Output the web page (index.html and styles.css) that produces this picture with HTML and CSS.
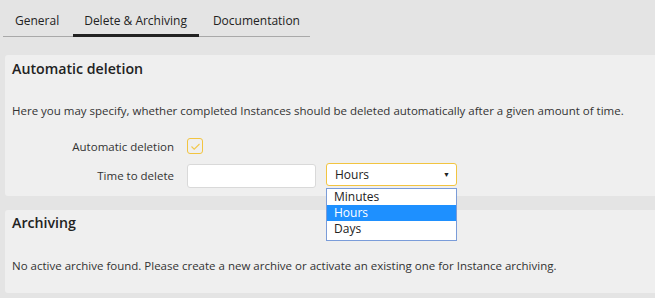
FILE: index.html
```html
<!DOCTYPE html>
<html>
<head>
<meta charset="utf-8">
<link rel="stylesheet" href="styles.css">
</head>
<body>
<div class="tabs">
  <div class="tab">General</div>
  <div class="tab active">Delete &amp; Archiving</div>
  <div class="tab">Documentation</div>
</div>

<section class="panel panel-delete">
  <h2 class="panel-title">Automatic deletion</h2>
  <p class="panel-text">Here you may specify, whether completed Instances should be deleted automatically after a given amount of time.</p>
  <div class="form">
    <div class="form-label">Automatic deletion</div>
    <div class="form-field">
      <span class="checkbox">
        <svg width="11" height="9" viewBox="0 0 11 9"><path d="M1.5 4.5 L4.2 7.2 L9.5 2" fill="none" stroke="#f2c84b" stroke-width="1.1"/></svg>
      </span>
    </div>
    <div class="form-label">Time to delete</div>
    <div class="form-field field-row">
      <span class="text-input"></span>
      <div class="select-wrap">
        <div class="select">
          <span>Hours</span>
          <span class="arrow">&#9660;</span>
        </div>
        <ul class="dropdown">
          <li>Minutes</li>
          <li class="selected">Hours</li>
          <li>Days</li>
        </ul>
      </div>
    </div>
  </div>
</section>

<section class="panel panel-archive">
  <h2 class="panel-title">Archiving</h2>
  <p class="panel-text">No active archive found. Please create a new archive or activate an existing one for Instance archiving.</p>
</section>
</body>
</html>
```

FILE: styles.css
```css
html, body {
  margin: 0;
  padding: 0;
}
body {
  background: #e4e4e4;
  font-family: "Open Sans", "Noto Sans", sans-serif;
  font-size: 11.5px;
  color: #333;
  width: 655px;
  height: 298px;
  overflow: hidden;
}
.tabs {
  display: flex;
  margin-left: 3px;
  width: 307px;
  border-bottom: 1px solid #a9a9a9;
  height: 37px;
  box-sizing: border-box;
}
.tab {
  padding: 12px 12px 0 12px;
  font-size: 12px;
  color: #222;
  box-sizing: border-box;
  height: 37px;
  white-space: nowrap;
}
.tab:first-child {
  padding-right: 14px;
}
.tab.active {
  border-bottom: 3px solid #222;
  padding-left: 11px;
  padding-right: 12px;
}
.tab:last-child {
  padding-left: 14px;
}
.panel {
  background: #efefef;
  margin-left: 5px;
  border-radius: 3px 0 0 3px;
  padding: 0 0 0 7px;
}
.panel-delete {
  margin-top: 18px;
  height: 141px;
  box-sizing: border-box;
  padding-top: 4px;
}
.panel-archive {
  margin-top: 14px;
  height: 83px;
  box-sizing: border-box;
  padding-top: 3px;
}
.panel-title {
  margin: 0;
  font-size: 14.2px;
  font-weight: 600;
  color: #222;
  line-height: 20px;
}
.panel-text {
  margin: 0;
  line-height: 17px;
}
.panel-delete .panel-text {
  margin-top: 23px;
}
.panel-archive .panel-text {
  margin-top: 24px;
}
.form {
  display: grid;
  grid-template-columns: 162px auto;
  column-gap: 13px;
  row-gap: 9px;
  margin-top: 19px;
  align-items: center;
}
.form-label {
  text-align: right;
}
.form-field {
  display: flex;
  align-items: center;
}
.checkbox {
  width: 14px;
  height: 14px;
  border: 1px solid #f2c440;
  border-radius: 3px;
  display: flex;
  align-items: center;
  justify-content: center;
}
.field-row {
  gap: 10px;
  align-items: flex-start;
}
.text-input {
  width: 127px;
  height: 22px;
  background: #fff;
  border: 1px solid #d9d9d9;
  border-radius: 3px;
  margin-top: 1px;
}
.select-wrap {
  position: relative;
  width: 131px;
}
.select {
  height: 23px;
  box-sizing: border-box;
  background: #fff;
  border: 1px solid #f2c440;
  border-radius: 3px;
  display: flex;
  align-items: center;
  justify-content: space-between;
  padding: 0 6px 0 8px;
  font-size: 12px;
  color: #222;
}
.arrow {
  font-size: 7px;
  color: #222;
}
.dropdown {
  position: absolute;
  left: 0;
  top: 25px;
  width: 131px;
  box-sizing: border-box;
  margin: 0;
  padding: 0 0 3px 0;
  list-style: none;
  background: #fff;
  border: 1px solid #7a9cd9;
  z-index: 2;
}
.dropdown li {
  height: 16px;
  line-height: 16px;
  padding-left: 7px;
  color: #222;
  font-size: 12px;
}
.dropdown li.selected {
  background: #1e90ff;
  color: #fff;
}
```
